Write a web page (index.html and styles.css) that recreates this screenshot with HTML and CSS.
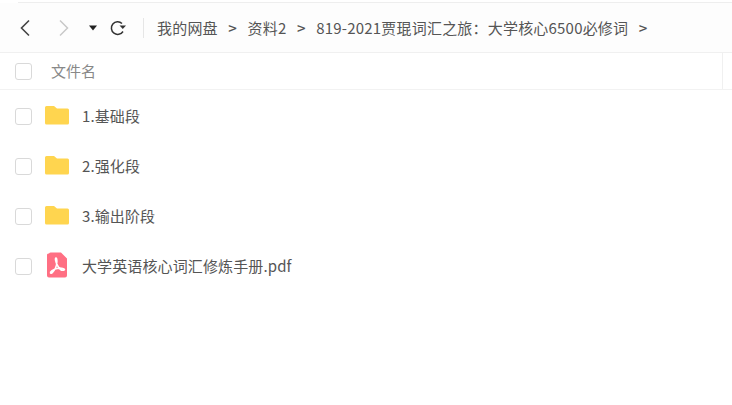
FILE: index.html
```html
<!DOCTYPE html>
<html lang="zh">
<head>
    <meta charset="UTF-8">
    <title>文件列表</title>
    <link rel="stylesheet" href="styles.css">
</head>
<body>
    <div class="top-rule"></div>
    <nav class="toolbar">
        <svg class="nav-icon back" width="12" height="18" viewBox="0 0 12 18"><path d="M10 1.500 2.500 9l7.500 7.500" fill="none" stroke="#444" stroke-width="1.600"/></svg>
        <svg class="nav-icon forward" width="12" height="18" viewBox="0 0 12 18"><path d="M2 1.500 9.500 9 2 16.500" fill="none" stroke="#c9c9c9" stroke-width="1.500"/></svg>
        <svg class="nav-icon caret" width="8" height="6" viewBox="0 0 8 6"><path d="M0 .5h8L4 5.500z" fill="#222"/></svg>
        <svg class="nav-icon refresh" width="18" height="18" viewBox="0 0 18 18"><path d="M14 12.500A6.300 6.300 0 1 1 13 4.500" fill="none" stroke="#333" stroke-width="1.500"/><path d="M10.500 6.500h6.500l-3.200 3.500z" fill="#333"/></svg>
        <div class="divider"></div>
        <div class="crumbs">
            <span>我的网盘</span><span class="sep">&gt;</span>
            <span>资料2</span><span class="sep">&gt;</span>
            <span>819-2021贾琨词汇之旅：大学核心6500必修词</span><span class="sep">&gt;</span>
        </div>
    </nav>
    <div class="list-head">
        <span class="check"></span>
        <span class="head-name">文件名</span>
        <span class="head-end"></span>
    </div>
    <ul class="files">
        <li class="file">
            <span class="check"></span>
            <svg class="folder" width="26" height="20" viewBox="0 0 26 20"><path d="M1 2.500Q1 1 2.500 1H10l3 2.500h10.500Q25 3.500 25 5v13q0 1.500-1.500 1.500h-21Q1 19.500 1 18z" fill="#ffd54f"/></svg>
            <span class="name">1.基础段</span>
        </li>
        <li class="file">
            <span class="check"></span>
            <svg class="folder" width="26" height="20" viewBox="0 0 26 20"><path d="M1 2.500Q1 1 2.500 1H10l3 2.500h10.500Q25 3.500 25 5v13q0 1.500-1.500 1.500h-21Q1 19.500 1 18z" fill="#ffd54f"/></svg>
            <span class="name">2.强化段</span>
        </li>
        <li class="file">
            <span class="check"></span>
            <svg class="folder" width="26" height="20" viewBox="0 0 26 20"><path d="M1 2.500Q1 1 2.500 1H10l3 2.500h10.500Q25 3.500 25 5v13q0 1.500-1.500 1.500h-21Q1 19.500 1 18z" fill="#ffd54f"/></svg>
            <span class="name">3.输出阶段</span>
        </li>
        <li class="file">
            <span class="check"></span>
            <svg class="pdf" width="26" height="26" viewBox="0 0 26 26"><path d="M5 1.500A2 2 0 0 1 7 .5h10l6 6v17a2 2 0 0 1-2 2H5a2 2 0 0 1-2-2v-21a2 2 0 0 1 2-1z" fill="#ff6f83"/><path d="M12 6c-1 0-.5 4 1.500 7.500S18 19 20 18s-3-2.500-7-1.500S6 20 6.500 21s3-1 5-5 1.500-10 .5-10z" fill="none" stroke="#fff" stroke-width="1.600"/></svg>
            <span class="name">大学英语核心词汇修炼手册.pdf</span>
        </li>
    </ul>
</body>
</html>
```

FILE: styles.css
```css
* {
    margin: 0;
    padding: 0;
    box-sizing: border-box;
}

body {
    background: #fff;
    color: #555;
    font-family: "Noto Sans CJK SC", "Noto Sans", sans-serif;
    font-size: 15px;
    line-height: 20px;
    height: 405px;
    overflow: hidden;
}

.top-rule {
    height: 3px;
    margin-left: 18px;
    border-bottom: 1px solid #eee;
}

.toolbar {
    display: flex;
    align-items: center;
    height: 50px;
    padding-left: 19px;
    border-bottom: 1px solid #f0f0f0;
    background: #fdfdfd;
}

.nav-icon {
    flex: none;
}

.forward {
    margin-left: 27px;
}

.caret {
    margin-left: 19px;
}

.refresh {
    margin-left: 12px;
}

.divider {
    width: 1px;
    height: 20px;
    margin-left: 16px;
    background: #e6e6e6;
}

.crumbs {
    display: flex;
    align-items: center;
    margin-left: 13px;
    color: #555;
    letter-spacing: .2px;
    white-space: nowrap;
}

.sep {
    margin: 0 10.5px;
    color: #555;
    font-weight: 500;
}

.list-head {
    display: flex;
    align-items: center;
    height: 37px;
    padding-left: 15px;
    border-bottom: 1px solid #f2f2f2;
    color: #888;
}

.head-name {
    margin-left: 19px;
}

.head-end {
    width: 1px;
    height: 36px;
    margin-left: auto;
    margin-right: 9px;
    background: #f0f0f0;
}

.check {
    flex: none;
    width: 17px;
    height: 17px;
    border: 1px solid #d9d9d9;
    border-radius: 3px;
    background: #fff;
}

.files {
    padding-top: 1px;
    list-style: none;
}

.file {
    display: flex;
    align-items: center;
    height: 50px;
    padding-left: 15px;
}

.folder {
    flex: none;
    margin-left: 12px;
    margin-bottom: 2px;
}

.pdf {
    flex: none;
    margin-left: 12px;
    margin-bottom: 2px;
}

.name {
    margin-left: 12px;
    color: #555;
    letter-spacing: .12px;
}
```
